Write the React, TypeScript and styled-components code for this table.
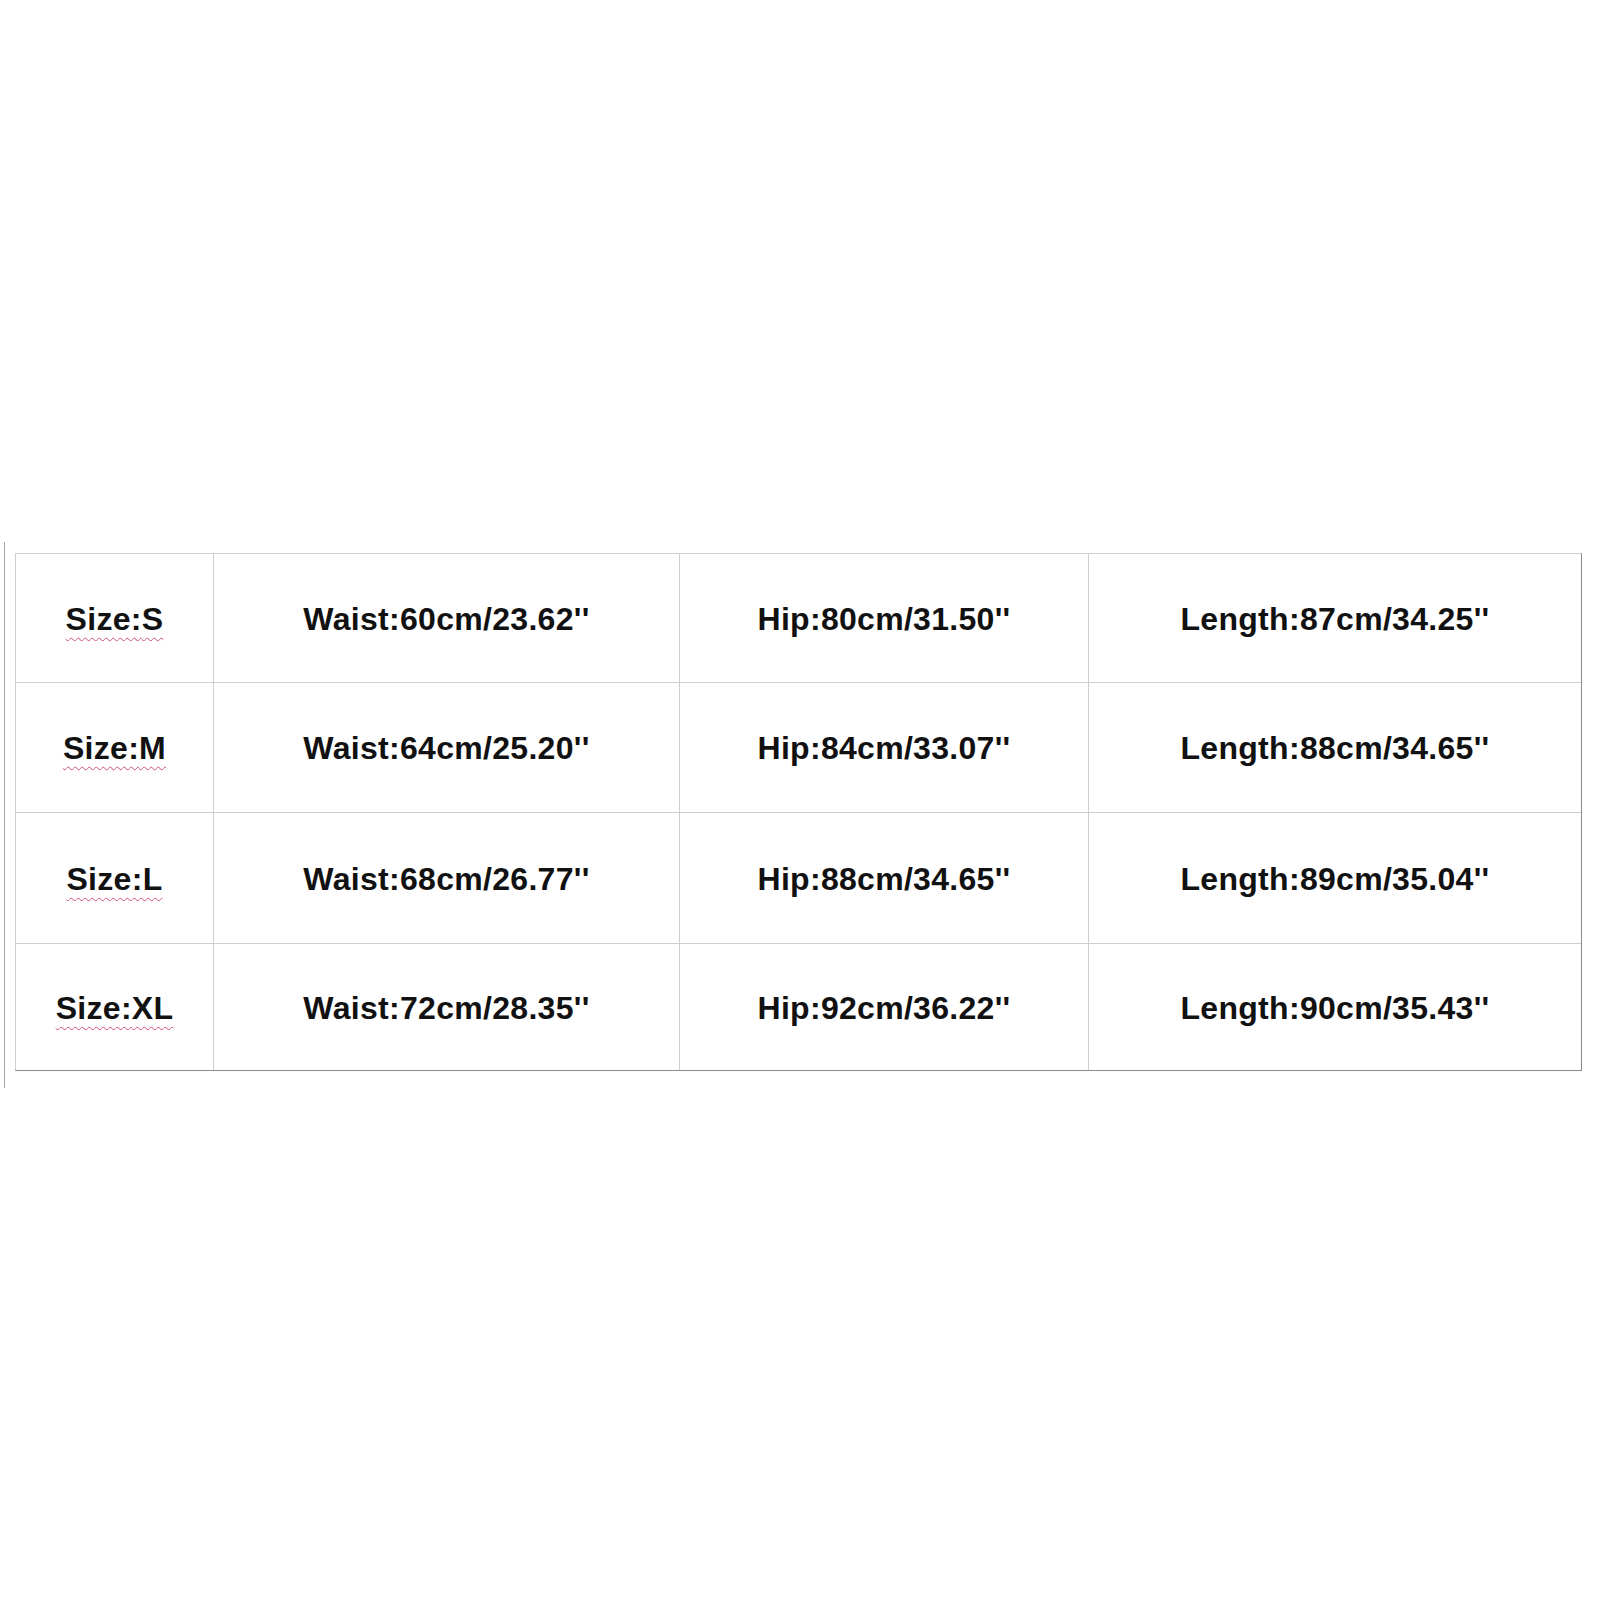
import React from "react";
import styled, { createGlobalStyle } from "styled-components";

const Global = createGlobalStyle`
  html, body { margin: 0; padding: 0; background: #ffffff; }
  body { font-family: "Liberation Sans", Arial, sans-serif; }
`;

const Page = styled.div`
  width: 1600px;
  height: 1600px;
  box-sizing: border-box;
  padding-top: 542px;
  background: #ffffff;
`;

const Frame = styled.div`
  display: flex;
  align-items: flex-start;
`;

const SideRule = styled.div`
  width: 1px;
  height: 546px;
  margin-left: 4px;
  background: #a8a8a8;
`;

const Table = styled.div`
  margin-left: 10px;
  margin-top: 11px;
  display: grid;
  grid-template-columns: 198px 466px 409px 492px;
  grid-template-rows: 129px 130px 131px 126px;
  border-top: 1px solid #cfcfcf;
  border-left: 1px solid #cfcfcf;
  border-right: 1px solid #8a8a8a;
  border-bottom: 1px solid #8a8a8a;
`;

const Cell = styled.div<{ $lastCol?: boolean; $lastRow?: boolean }>`
  box-sizing: border-box;
  display: flex;
  align-items: center;
  justify-content: center;
  border-right: ${(p) => (p.$lastCol ? "none" : "1px solid #cfcfcf")};
  border-bottom: ${(p) => (p.$lastRow ? "none" : "1px solid #cfcfcf")};
  font-family: "Liberation Sans", Arial, sans-serif;
  font-weight: 700;
  font-size: 32px;
  letter-spacing: 0.3px;
  color: #111111;
  white-space: nowrap;
  padding-top: 2px;
`;

const SizeLabel = styled.span`
  text-decoration: underline wavy #d0506e;
  text-decoration-thickness: 1px;
  text-underline-offset: 7px;
`;

const rows = [
  ["S", "60cm/23.62", "80cm/31.50", "87cm/34.25"],
  ["M", "64cm/25.20", "84cm/33.07", "88cm/34.65"],
  ["L", "68cm/26.77", "88cm/34.65", "89cm/35.04"],
  ["XL", "72cm/28.35", "92cm/36.22", "90cm/35.43"],
];

export default function App() {
  return (
    <Page>
      <Global />
      <Frame>
        <SideRule />
        <Table>
          {rows.map((r, i) => {
            const last = i === rows.length - 1;
            return (
              <React.Fragment key={r[0]}>
                <Cell $lastRow={last}>
                  <SizeLabel>Size:{r[0]}</SizeLabel>
                </Cell>
                <Cell $lastRow={last}>Waist:{r[1]}''</Cell>
                <Cell $lastRow={last}>Hip:{r[2]}''</Cell>
                <Cell $lastRow={last} $lastCol>
                  Length:{r[3]}''
                </Cell>
              </React.Fragment>
            );
          })}
        </Table>
      </Frame>
    </Page>
  );
}
